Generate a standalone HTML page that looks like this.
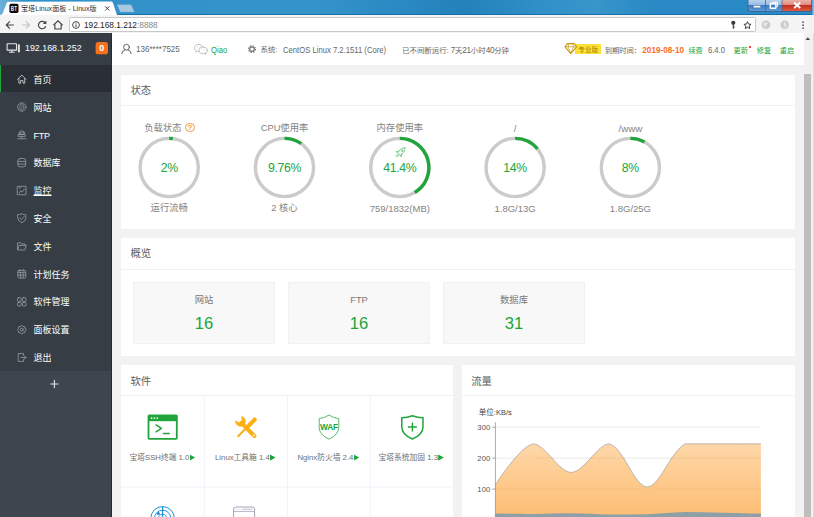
<!DOCTYPE html>
<html lang="zh-CN">
<head>
<meta charset="utf-8">
<title>宝塔Linux面板 - Linux版</title>
<style>
*{box-sizing:border-box;margin:0;padding:0}
html,body{width:814px;height:517px;overflow:hidden;background:#f2f2f2}
body{position:relative;font-family:"Liberation Sans","Noto Sans CJK SC",sans-serif;font-size:8.4px;color:#666;-webkit-font-smoothing:antialiased}
.abs{position:absolute}
.t{position:absolute;white-space:nowrap;line-height:1}
svg{position:absolute;overflow:visible}
/* browser chrome */
#tabbar{left:0;top:0;width:814px;height:15px;background:linear-gradient(90deg,#6cb0da 0%,#62a9d6 0.8%,#3190c9 3%,#3594c9 38%,#2a88c2 50%,#2481b9 57%,#2f8fc7 66%,#3996cb 73%,#2989c4 80%,#2a8ac6 100%)}
#toolbar{left:0;top:14.5px;width:814px;height:18.5px;background:#f4f4f4}
#omni{left:68.6px;top:17px;width:687.3px;height:15.2px;background:#fff;border:0.8px solid #c8c8c8;border-radius:1.6px}
/* sidebar */
#side{left:0;top:33px;width:111.5px;height:484px;background:#363d45}
#sidebot{left:0;top:370.8px;width:111.5px;height:147px;background:#3d454e}
#active{left:0;top:65px;width:111.5px;height:27.4px;background:#2a2f36;border-left:1.8px solid #20a53a}
.mi{left:33.5px;color:#fff;font-size:9px}
/* header */
#hdr{left:112px;top:33px;width:692px;height:32px;background:#fff}
.card{background:#fff}
.ct{font-size:10.4px;color:#606060}
.hr{height:1px;background:#f1f1f1}
.lbl{font-size:9.3px;color:#838383;text-align:center;width:116px}
.val{font-size:12.3px;letter-spacing:-0.35px;color:#20a53a;text-align:center;width:116px}
.ovb{background:#f8f8f8;border:1px solid #f1f1f1;width:141.6px;height:61.5px;top:282px}
.g{color:#20a53a}
.n{font-size:8.3px;letter-spacing:-0.35px}
.sw{font-size:7.75px;color:#707070;text-align:center;width:83px}
.tri{display:inline-block;width:5.6px;height:6.4px;background:#20a53a;clip-path:polygon(0 0,100% 50%,0 100%);margin-left:0.2px;vertical-align:-0.9px}
</style>
</head>
<body>
<!-- ===== browser chrome ===== -->
<div class="abs" id="tabbar"></div>
<svg style="left:0;top:0" width="814" height="16" viewBox="0 0 814 16">
  <defs><linearGradient id="cl" x1="0" y1="0" x2="0" y2="1"><stop offset="0" stop-color="#eab0a8"/><stop offset="0.45" stop-color="#e08a80"/><stop offset="0.5" stop-color="#c4301f"/><stop offset="1" stop-color="#dc5a40"/></linearGradient>
  <linearGradient id="wb" x1="0" y1="0" x2="0" y2="1"><stop offset="0" stop-color="#b9d2ec"/><stop offset="0.45" stop-color="#96bbe3"/><stop offset="0.5" stop-color="#3f7cc2"/><stop offset="1" stop-color="#5d9ad6"/></linearGradient></defs>
  <path d="M0 15 Q2 14.6 2.6 13.4 L6.6 3 Q7.2 1.7 8.6 1.7 L111 1.6 Q112.5 1.6 113 3 L116.8 14.5 L120 15 L814 15 L814 16 L0 16 Z" fill="#fff"/>
  <rect x="117" y="14.1" width="697" height="0.8" fill="#1568a2"/>
  <path d="M117.2 4.8 L131 4.8 L134.4 11.9 L120.4 11.9 Z" fill="#a9c9e3" stroke="#86b3d8" stroke-width="0.5"/>
  <!-- window controls -->
  <path d="M747.6 0 H812 V9.2 Q812 11.8 809.4 11.8 H750.2 Q747.6 11.8 747.6 9.2 Z" fill="#3b5f8a"/>
  <path d="M748.4 0 H765 V11 H750.6 Q748.4 11 748.4 8.8 Z" fill="url(#wb)"/>
  <rect x="765.7" y="0" width="16" height="11" fill="url(#wb)"/>
  <path d="M782.4 0 H811.2 V8.8 Q811.2 11 809 11 H782.4 Z" fill="url(#cl)"/>
  <rect x="753.4" y="5.6" width="7.2" height="2.2" rx="0.5" fill="#fff" stroke="#3d5a80" stroke-width="0.4"/>
  <rect x="770.3" y="3.6" width="5.6" height="4.6" rx="0.5" fill="none" stroke="#fff" stroke-width="1.5"/>
  <path d="M772.4 3.2 V2.2 H777.6 V6.6 H776.6" fill="none" stroke="#fff" stroke-width="1"/>
  <path d="M794.2 2.4 L800.2 8 M800.2 2.4 L794.2 8" stroke="#fff" stroke-width="2"/>
  <rect x="812.4" y="0" width="1.6" height="33" fill="#7fbde8"/>
  <!-- favicon -->
  <rect x="9.4" y="3.8" width="9.1" height="9.1" rx="1.7" fill="#080808"/>
  <text x="13.95" y="10.9" font-size="7.2" font-weight="700" fill="#eee" text-anchor="middle" font-family="Liberation Sans, sans-serif" textLength="6.2" lengthAdjust="spacingAndGlyphs">BT</text>
  <path d="M105.2 6.3 L109.4 10.5 M109.4 6.3 L105.2 10.5" stroke="#333" stroke-width="0.9"/>
</svg>
<div class="t" style="left:21px;top:6.1px;font-size:7.1px;color:#333">宝塔Linux面板 - Linux版</div>
<div class="abs" id="toolbar"></div>
<div class="abs" id="omni"></div>
<svg style="left:0;top:15px" width="814" height="18" viewBox="0 15 814 18" fill="none">
  <!-- back -->
  <path d="M13.8 25 H6.4 M9.9 21.4 L6.3 25 L9.9 28.6" stroke="#444" stroke-width="1.15"/>
  <!-- forward -->
  <path d="M22 25 H29.4 M25.9 21.4 L29.5 25 L25.9 28.6" stroke="#c4c4c4" stroke-width="1.15"/>
  <!-- reload -->
  <path d="M45.3 23 A3.7 3.7 0 1 0 45.7 26.2" stroke="#444" stroke-width="1.15"/>
  <path d="M46.3 20.6 V24 H42.9 Z" fill="#444"/>
  <!-- home -->
  <path d="M53.4 25.2 L58 20.9 L62.6 25.2 M54.9 24.4 V29 H61.1 V24.4" stroke="#444" stroke-width="1.15"/>
  <!-- info -->
  <circle cx="76" cy="25" r="3.4" stroke="#3c3c3c" stroke-width="0.95"/>
  <path d="M76 24.4 V27 M76 22.8 V23.6" stroke="#3c3c3c" stroke-width="1"/>
  <!-- key -->
  <circle cx="733.3" cy="22.8" r="2.1" fill="#3a3a3a"/><path d="M733.3 24 V28.7 M733.3 27 H734.7" stroke="#3a3a3a" stroke-width="1.1"/>
  <!-- star -->
  <path d="M747.5 21.7 L748.55 24.1 L751.1 24.3 L749.15 26 L749.75 28.6 L747.5 27.2 L745.25 28.6 L745.85 26 L743.9 24.3 L746.45 24.1 Z" stroke="#3a3a3a" stroke-width="0.95"/>
  <!-- ext icons -->
  <circle cx="766" cy="24.7" r="4.3" fill="#c9c9c9"/><path d="M763.5 23 Q766 21 768 23.5 Q766 25 765.5 27.5 Q763 26 763.5 23Z" fill="#e6e6e6"/>
  <circle cx="784.7" cy="24.7" r="4.3" fill="#cdcdcd"/><path d="M784 22 Q787 23 786 28 Q783.5 26 784 22Z" fill="#e9e9e9"/>
  <!-- menu -->
  <circle cx="803.1" cy="22.2" r="0.85" fill="#555"/><circle cx="803.1" cy="25.2" r="0.85" fill="#555"/><circle cx="803.1" cy="28.2" r="0.85" fill="#555"/>
</svg>
<div class="t" style="left:84px;top:20.9px;font-size:9.1px;color:#222;transform:scaleX(0.911);transform-origin:0 0">192.168.1.212<span style="color:#888">:8888</span></div>

<!-- ===== sidebar ===== -->
<div class="abs" id="side"></div>
<div class="abs" id="sidebot"></div>
<div class="abs" id="active"></div>

<div class="abs" style="left:110.5px;top:33px;width:1px;height:484px;background:#252a30"></div>
<svg style="left:0;top:33px" width="112" height="484" viewBox="0 33 112 484" fill="none" stroke-linecap="round" stroke-linejoin="round">
  <!-- monitor icon -->
  <rect x="7.1" y="43.7" width="9.4" height="6.4" rx="0.4" stroke="#e8e8e8" stroke-width="1.1"/>
  <path d="M9.4 52.2 H14.2 M11.8 50.3 V52" stroke="#e8e8e8" stroke-width="1"/>
  <rect x="17.9" y="44.4" width="1.9" height="7.9" fill="#e8e8e8"/>
  <!-- badge -->
  <rect x="95.6" y="42" width="12.4" height="12.3" rx="2.6" fill="#f7711c"/>

  <path d="M17.6 79.4 L21.8 75.0 L26 79.4 M18.9 78.60000000000001 V83.2 H20.6 V80.60000000000001 H23 V83.2 H24.7 V78.60000000000001" stroke="#d8dadc" stroke-width="0.8" stroke-width="0.95"/>
  <circle cx="21.8" cy="107.03" r="4.2" stroke="#8d9399" stroke-width="0.75"/><ellipse cx="21.8" cy="107.03" rx="2" ry="4.2" stroke="#8d9399" stroke-width="0.45"/><path d="M17.6 107.03 H26 M18.4 104.83 H25.2 M18.4 109.23 H25.2 M21.8 102.83 V111.23" stroke="#8d9399" stroke-width="0.4"/>
  <path d="M19 134.26000000000002 Q19 130.66000000000003 21.8 130.66000000000003 Q24.6 130.66000000000003 24.6 134.26000000000002 Z M18.5 134.46 H25.1 V136.46 H18.5 Z M21.8 136.66000000000003 V138.46 M17.6 138.76000000000002 H26" stroke="#9a9fa5" stroke-width="0.8"/><path d="M19.2 132.86 H24.4" stroke="#9a9fa5" stroke-width="0.8" stroke-width="0.5"/>
  <rect x="17.9" y="158.49" width="7.8" height="8.4" rx="2.2" stroke="#9a9fa5" stroke-width="0.8"/><path d="M18 161.39 H25.6 M18 164.09 H25.6" stroke="#9a9fa5" stroke-width="0.8" stroke-width="0.6"/>
  <rect x="17.6" y="186.32000000000002" width="8.4" height="8.4" stroke="#9a9fa5" stroke-width="0.8"/><path d="M19.2 192.92000000000002 L20.8 190.72 L22.2 192.12 L24.4 189.12" stroke="#9a9fa5" stroke-width="0.8" stroke-width="0.55"/><path d="M19.2 187.92000000000002 H20.4" stroke="#9a9fa5" stroke-width="0.8" stroke-width="0.55"/>
  <path d="M17.8 214.75 Q20 214.75 21.8 213.75 Q23.6 214.75 25.8 214.75 V218.35 Q25.8 220.95 21.8 222.75 Q17.8 220.95 17.8 218.35 Z" stroke="#9a9fa5" stroke-width="0.8"/><path d="M19.8 217.95 L21.3 219.54999999999998 L24 216.54999999999998" stroke="#9a9fa5" stroke-width="0.8"/>
  <path d="M17.6 249.58 V242.78 H20.6 L21.6 243.98000000000002 H25 V245.38 M17.6 249.58 L19.2 245.38 H26.4 L24.8 249.58 Z" stroke="#9a9fa5" stroke-width="0.8"/>
  <rect x="17.8" y="270.40999999999997" width="8" height="7.6" rx="1.2" stroke="#9a9fa5" stroke-width="0.8"/><path d="M17.9 272.31 H25.7 M20.4 272.40999999999997 V277.90999999999997 M23.1 272.40999999999997 V277.90999999999997 M17.9 275.11 H25.7" stroke="#9a9fa5" stroke-width="0.8" stroke-width="0.45"/><path d="M19.8 269.61 V270.81 M23.7 269.61 V270.81" stroke="#9a9fa5" stroke-width="0.8" stroke-width="0.6"/>
  <rect x="17.6" y="297.64" width="3.6" height="3.7" rx="0.9" stroke="#9a9fa5" stroke-width="0.8"/><rect x="17.6" y="302.34" width="3.6" height="3.7" rx="0.9" stroke="#9a9fa5" stroke-width="0.8"/><rect x="22.4" y="297.64" width="3.6" height="3.7" rx="0.9" stroke="#9a9fa5" stroke-width="0.8"/><rect x="22.4" y="302.34" width="3.6" height="3.7" rx="0.9" stroke="#9a9fa5" stroke-width="0.8"/>
  <polygon points="26.10,329.67 25.03,331.01 24.84,332.71 23.14,332.90 21.80,333.97 20.46,332.90 18.76,332.71 18.57,331.01 17.50,329.67 18.57,328.33 18.76,326.63 20.46,326.44 21.80,325.37 23.14,326.44 24.84,326.63 25.03,328.33" stroke="#9a9fa5" stroke-width="0.8" stroke-width="0.7"/><circle cx="21.8" cy="329.67" r="1.5" stroke="#9a9fa5" stroke-width="0.8" stroke-width="0.7"/>
  <path d="M23.6 355.5 V353.6 H18.2 V361.4 H23.6 V359.5" stroke="#9a9fa5" stroke-width="0.8"/><path d="M21 357.5 H26 M24.4 355.9 L26 357.5 L24.4 359.1" stroke="#9a9fa5" stroke-width="0.8"/>
  <path d="M50.8 384 H58 M54.4 380.4 V387.6" stroke="#e6e6e6" stroke-width="1.1"/>
</svg>
<div class="t" style="left:25.4px;top:43px;font-size:9.7px;color:#fff;transform:scaleX(0.914);transform-origin:0 0">192.168.1.252</div>
<div class="t" style="left:95.6px;top:43.7px;width:12.4px;text-align:center;font-size:9px;font-weight:700;color:#fff">0</div>
<div class="t mi" style="top:75.8px">首页</div>
<div class="t mi" style="top:103.6px">网站</div>
<div class="t mi" style="top:131.5px;letter-spacing:-0.3px">FTP</div>
<div class="t mi" style="top:159.3px">数据库</div>
<div class="t mi" style="top:187.1px;text-decoration:underline;text-decoration-thickness:0.6px;text-underline-offset:1px">监控</div>
<div class="t mi" style="top:214.9px">安全</div>
<div class="t mi" style="top:242.8px">文件</div>
<div class="t mi" style="top:270.6px">计划任务</div>
<div class="t mi" style="top:298.4px">软件管理</div>
<div class="t mi" style="top:326.3px">面板设置</div>
<div class="t mi" style="top:354.1px">退出</div>

<!-- ===== header ===== -->
<div class="abs" id="hdr"></div>
<svg style="left:112px;top:33px" width="692" height="32" viewBox="112 33 692 32" fill="none" stroke-linecap="round" stroke-linejoin="round">
  <!-- user -->
  <circle cx="126.5" cy="47.2" r="2.9" stroke="#555" stroke-width="0.9"/>
  <path d="M121.8 53.6 Q122.4 50.4 125 49.8 M131.2 53.6 Q130.6 50.4 128 49.8" stroke="#555" stroke-width="0.9"/>
  <!-- wechat -->
  <path d="M198.6 44.4 C195.8 44.4 194.4 46.2 194.4 47.8 C194.4 49 195 49.9 196 50.6 L195.6 52 L197.2 51.2 C197.8 51.3 198.2 51.4 198.8 51.4" stroke="#aaa" stroke-width="0.7"/>
  <path d="M198.6 44.4 C201 44.4 202.6 45.8 202.9 47.3" stroke="#aaa" stroke-width="0.7"/>
  <ellipse cx="203.2" cy="50.4" rx="4.1" ry="3.3" stroke="#aaa" stroke-width="0.7"/>
  <path d="M204.6 53.4 L206 54.4 L205.7 53" stroke="#aaa" stroke-width="0.6"/>
  <circle cx="197.2" cy="47" r="0.45" fill="#aaa"/><circle cx="200" cy="47" r="0.45" fill="#aaa"/>
  <circle cx="201.9" cy="49.8" r="0.4" fill="#aaa"/><circle cx="204.5" cy="49.8" r="0.4" fill="#aaa"/>
  <!-- gear -->
  <g transform="translate(252 49.1)"><circle r="2.3" stroke="#6e6e6e" stroke-width="1.2"/><circle r="3.4" stroke="#6e6e6e" stroke-width="1.2" stroke-dasharray="1.3 1.37" stroke-linecap="butt"/></g>
</svg>
<div class="abs" style="left:575px;top:44px;width:26.3px;height:10px;background:#fbe238;z-index:0"></div>
<svg style="left:560px;top:40px" width="20" height="18" viewBox="560 40 20 18" fill="none" stroke-linejoin="round">
  <path d="M567.4 43.6 H574.2 L576.6 46.8 L570.8 53.6 L565 46.8 Z" fill="#fff" stroke="#c9980f" stroke-width="1.1"/>
  <path d="M565.2 46.8 H576.4 M568.8 43.8 L568 46.8 L570.8 53.2 L573.6 46.8 L572.8 43.8" stroke="#c9980f" stroke-width="0.7"/>
</svg>
<div class="t" style="left:135.8px;top:45.3px;font-size:8.6px;color:#666;transform:scaleX(0.935);transform-origin:0 0">136****7525</div>
<div class="t" style="left:210.8px;top:45.5px;font-size:8.3px;color:#20a53a;transform:scaleX(0.924);transform-origin:0 0">Qiao</div>
<div class="t" style="left:260.6px;top:45.9px;font-size:7.4px;color:#666">系统:</div>
<div class="t" id="osv" style="left:283.3px;top:45.6px;font-size:8.3px;color:#666;transform:scaleX(0.925);transform-origin:0 0">CentOS Linux 7.2.1511 (Core)</div>
<div class="t" id="upt" style="left:402.2px;top:45.9px;font-size:7.4px;color:#666">已不间断运行: <span class="n">7</span>天<span class="n">21</span>小时<span class="n">40</span>分钟</div>
<div class="t" style="left:578.3px;top:46.8px;font-size:6.6px;color:#a67c00">专业版</div>
<div class="t" style="left:604.7px;top:46.7px;font-size:7.3px;color:#666">到期时间：</div>
<div class="t" style="left:642.3px;top:46.7px;font-size:8.2px;color:#fc6d26;font-weight:700">2019-08-10</div>
<div class="t" style="left:688.4px;top:46.7px;font-size:7.2px;color:#20a53a">续费</div>
<div class="t" style="left:708.2px;top:46.2px;font-size:8.3px;color:#666;transform:scaleX(0.920);transform-origin:0 0">6.4.0</div>
<div class="t" style="left:733.5px;top:46.7px;font-size:7.2px;color:#20a53a">更新</div>
<div class="abs" style="left:749.2px;top:45.7px;width:2.2px;height:2.2px;border-radius:50%;background:#f00"></div>
<div class="t" style="left:756.8px;top:46.7px;font-size:7.2px;color:#20a53a">修复</div>
<div class="t" style="left:779.8px;top:46.7px;font-size:7.2px;color:#20a53a">重启</div>

<!-- ===== cards ===== -->
<div class="abs card" id="c1" style="left:121px;top:75px;width:674px;height:154px"></div>
<div class="abs card" id="c2" style="left:121px;top:238px;width:674px;height:118px"></div>
<div class="abs card" id="c3" style="left:121px;top:365.1px;width:332.3px;height:152px"></div>
<div class="abs card" id="c4" style="left:461.7px;top:365.1px;width:333.2px;height:152px"></div>

<div class="t ct" style="left:130.4px;top:85.8px">状态</div>
<div class="abs hr" style="left:121px;top:105px;width:674px"></div>
<div class="t ct" style="left:130.4px;top:249.4px">概览</div>
<div class="abs hr" style="left:121px;top:268.6px;width:674px"></div>
<div class="t ct" style="left:130.4px;top:377px">软件</div>
<div class="abs hr" style="left:121px;top:395.4px;width:332.3px"></div>
<div class="t ct" style="left:471.2px;top:377px">流量</div>
<div class="abs hr" style="left:461.7px;top:395.4px;width:333.2px"></div>
<svg style="left:121px;top:106px" width="674" height="122" viewBox="121 106 674 122" fill="none">
  <circle cx="169.2" cy="167.5" r="29.1" stroke="#cbcbcb" stroke-width="3.4"/>
  <path d="M169.2 138.4 A29.1 29.1 0 0 1 172.85 138.63" stroke="#20a53a" stroke-width="3.4"/>
  <circle cx="284.5" cy="167.5" r="29.1" stroke="#cbcbcb" stroke-width="3.4"/>
  <path d="M284.5 138.4 A29.1 29.1 0 0 1 301.25 143.70" stroke="#20a53a" stroke-width="3.4"/>
  <circle cx="399.8" cy="167.5" r="29.1" stroke="#cbcbcb" stroke-width="3.4"/>
  <path d="M399.8 138.4 A29.1 29.1 0 0 1 414.77 192.45" stroke="#20a53a" stroke-width="3.4"/>
  <circle cx="515.1" cy="167.5" r="29.1" stroke="#cbcbcb" stroke-width="3.4"/>
  <path d="M515.1 138.4 A29.1 29.1 0 0 1 537.52 148.95" stroke="#20a53a" stroke-width="3.4"/>
  <circle cx="630.4" cy="167.5" r="29.1" stroke="#cbcbcb" stroke-width="3.4"/>
  <path d="M630.4 138.4 A29.1 29.1 0 0 1 644.42 142.00" stroke="#20a53a" stroke-width="3.4"/>
  <g transform="translate(400.5 152.4) rotate(45)" stroke="#5cbf70" stroke-width="0.7" fill="none" stroke-linejoin="round" stroke-linecap="round">
    <path d="M0 -6.4 C2.4 -4.2 2.6 -0.6 1.9 2.2 H-1.9 C-2.6 -0.6 -2.4 -4.2 0 -6.4 Z"/>
    <circle cx="0" cy="-2.4" r="0.9"/>
    <path d="M-2 0 L-3.8 2.6 L-1.9 2.2 M2 0 L3.8 2.6 L1.9 2.2"/>
    <path d="M-1 3.4 V5 M0 3.4 V6 M1 3.4 V5"/>
  </g>
</svg>
<div class="t lbl" style="left:104.9px;top:124.1px">负载状态</div>
<div class="abs" style="left:185.3px;top:122.8px;width:9.4px;height:9.4px;border:1px solid #f59a3e;border-radius:50%"></div><div class="t" style="left:185.3px;top:123.9px;width:9.4px;text-align:center;font-size:8px;font-weight:700;color:#f59a3e">?</div>
<div class="t val" style="left:111.2px;top:162px">2%</div>
<div class="t lbl" style="left:111.2px;top:204px">运行流畅</div>
<div class="t lbl" style="left:226.5px;top:124.1px">CPU使用率</div>
<div class="t val" style="left:226.5px;top:162px">9.76%</div>
<div class="t lbl" style="left:226.5px;top:204px">2 核心</div>
<div class="t lbl" style="left:341.8px;top:124.1px">内存使用率</div>
<div class="t val" style="left:341.8px;top:162px">41.4%</div>
<div class="t lbl" style="left:341.8px;top:203.8px;font-size:9.5px">759/1832(MB)</div>
<div class="t lbl" style="left:457.1px;top:123.9px;font-size:9.8px">/</div>
<div class="t val" style="left:457.1px;top:162px">14%</div>
<div class="t lbl" style="left:457.1px;top:203.8px;font-size:9.5px">1.8G/13G</div>
<div class="t lbl" style="left:572.4px;top:123.9px;font-size:9.8px">/www</div>
<div class="t val" style="left:572.4px;top:162px">8%</div>
<div class="t lbl" style="left:572.4px;top:203.8px;font-size:9.5px">1.8G/25G</div>
<div class="abs ovb" style="left:133.2px"></div>
<div class="t" style="left:133.2px;width:141.6px;text-align:center;top:296px;font-size:9.3px;color:#777">网站</div>
<div class="t g" style="left:133.2px;width:141.6px;text-align:center;top:315.8px;font-size:16.6px">16</div>
<div class="abs ovb" style="left:288.2px"></div>
<div class="t" style="left:288.2px;width:141.6px;text-align:center;top:296px;font-size:9.3px;color:#777">FTP</div>
<div class="t g" style="left:288.2px;width:141.6px;text-align:center;top:315.8px;font-size:16.6px">16</div>
<div class="abs ovb" style="left:443.2px"></div>
<div class="t" style="left:443.2px;width:141.6px;text-align:center;top:296px;font-size:9.3px;color:#777">数据库</div>
<div class="t g" style="left:443.2px;width:141.6px;text-align:center;top:315.8px;font-size:16.6px">31</div>

<svg style="left:121px;top:396px" width="333" height="121" viewBox="121 396 333 121" fill="none" stroke-linejoin="round">
  <path d="M204.4 396.5 V517 M287.5 396.5 V517 M370.3 396.5 V517 M121 487 H453.5" stroke="#efeff8" stroke-width="0.9"/>
  <!-- ssh icon -->
  <rect x="148.5" y="415.5" width="28.3" height="23.4" rx="0.8" stroke="#20a53a" stroke-width="1.8"/>
  <rect x="148" y="415" width="29.3" height="6.2" fill="#20a53a"/>
  <circle cx="151.6" cy="418.1" r="0.85" fill="#fff"/><circle cx="154.4" cy="418.1" r="0.85" fill="#fff"/><circle cx="157.2" cy="418.1" r="0.85" fill="#fff"/>
  <path d="M155.6 424.6 L161.4 428.4 L155.6 432.2 M162.8 433.4 H169.8" stroke="#20a53a" stroke-width="1.5"/>
  <!-- tools icon -->
  <g stroke="#fbb116" stroke-linecap="round">
    <path d="M241.4 423 L254.4 436" stroke-width="3.9"/>
    <path d="M254.6 419.6 L248.6 425.8" stroke-width="4.2"/>
    <path d="M246 428.2 L238.2 436.2" stroke-width="2"/>
  </g>
  <path d="M235.6 420.8 A4.9 4.9 0 1 0 241.8 416.6 L242 420.4 L239.4 423 Z" fill="#fbb116" stroke="#fbb116" stroke-width="0.8" stroke-linejoin="round"/>
  <circle cx="253.9" cy="435.5" r="0.9" fill="#fff"/>
  <!-- waf shield -->
  <path d="M329 415 Q333.4 418 338.8 418.6 V427.6 Q338.8 434.4 329 439.2 Q319.2 434.4 319.2 427.6 V418.6 Q324.6 418 329 415 Z" stroke="#20a53a" stroke-width="0.75"/>
  <!-- shield plus -->
  <path d="M412.4 415.8 Q417.6 417.8 423 417.8 V427 Q423 434.6 412.4 439 Q401.8 434.6 401.8 427 V417.8 Q407.2 417.8 412.4 415.8 Z" stroke="#20a53a" stroke-width="1.5"/>
  <path d="M412.4 422.6 V431.4 M408 427 H416.8" stroke="#20a53a" stroke-width="1.4"/>
  <!-- radar -->
  <g stroke="#1c8fd6">
    <circle cx="162.6" cy="518.4" r="11.8" stroke-width="1"/>
    <circle cx="162.6" cy="518.4" r="8.2" stroke-width="1"/>
    <circle cx="162.6" cy="518.4" r="4.2" stroke-width="0.9"/>
    <path d="M162.6 506.6 V517" stroke-width="1.2"/>
  </g>
  <circle cx="158.4" cy="513.6" r="1.5" fill="#1c8fd6"/>
  <!-- window -->
  <path d="M233.6 517 V509 Q233.6 507 235.6 507 H252.6 Q254.6 507 254.6 509 V517" stroke="#a3a3b5" stroke-width="1"/>
  <path d="M233.6 511.4 H254.6" stroke="#a3a3b5" stroke-width="0.8"/>
  <path d="M235.6 509.2 H236.4 M237.6 509.2 H238.4 M239.6 509.2 H240.4 M242.4 509.2 H252.4" stroke="#a3a3b5" stroke-width="0.7"/>
</svg>
<div class="t" style="left:319.2px;top:423px;width:19.6px;text-align:center;font-size:8.4px;font-weight:700;color:#20a53a;letter-spacing:-0.25px">WAF</div>
<div class="t sw" style="left:120.8px;top:453.9px">宝塔SSH终端 1.0<span class="tri"></span></div>
<div class="t sw" style="left:203.8px;top:453.9px">Linux工具箱 1.4<span class="tri"></span></div>
<div class="t sw" style="left:286.8px;top:453.9px">Nginx防火墙 2.4<span class="tri"></span></div>
<div class="t sw" style="left:369.7px;top:453.9px">宝塔系统加固 1.3<span class="tri"></span></div>

<svg id="chart" style="left:462px;top:397px" width="333" height="120" viewBox="462 397 333 120" fill="none">
  <defs><linearGradient id="og" x1="0" y1="443" x2="0" y2="517" gradientUnits="userSpaceOnUse"><stop offset="0" stop-color="#fed3a0"/><stop offset="1" stop-color="#fdb663"/></linearGradient></defs>
  <path d="M495.4 427.1 H760.9 M495.4 458.1 H760.9 M495.4 489.1 H760.9" stroke="#e2e2e2" stroke-width="0.7"/>
  <path d="M495.40 484.76 C495.40 484.76 519.80 446.05 533.33 443.84 C544.83 443.84 558.74 472.36 571.26 472.36 C583.77 472.36 597.86 443.84 609.19 443.84 C622.89 446.47 634.60 486.93 647.11 486.93 C659.63 486.93 669.97 452.40 685.04 443.84 C695.00 443.84 710.46 443.84 722.97 443.84 C735.49 443.84 760.90 443.84 760.90 443.84 L760.9 520 L495.4 520 Z" fill="url(#og)" fill-opacity="0.9"/>
  <path d="M533.5 458.1 H555 M590 458.1 H626 M670 458.1 H760.9 M495.4 489.1 H642 M653 489.1 H760.9" stroke="#d89a58" stroke-width="0.6" opacity="0.3"/>
  <path d="M495.40 484.76 C495.40 484.76 519.80 446.05 533.33 443.84 C544.83 443.84 558.74 472.36 571.26 472.36 C583.77 472.36 597.86 443.84 609.19 443.84 C622.89 446.47 634.60 486.93 647.11 486.93 C659.63 486.93 669.97 452.40 685.04 443.84 C695.00 443.84 710.46 443.84 722.97 443.84 C735.49 443.84 760.90 443.84 760.90 443.84" stroke="#a4a4a4" stroke-width="0.7"/>
  <path d="M495.40 513.59 C495.40 513.59 520.81 513.90 533.33 513.90 C545.85 513.85 558.74 513.28 571.26 513.28 C583.78 513.38 596.67 514.37 609.19 514.52 C621.70 514.52 634.61 514.52 647.11 514.21 C659.64 513.80 672.52 512.30 685.04 512.04 C697.55 512.04 710.46 512.40 722.97 512.66 C735.49 512.92 760.90 513.59 760.90 513.59 L760.9 520 L495.4 520 Z" fill="#8da0a8"/>
  <path d="M495.4 422.4 V517" stroke="#888" stroke-width="0.7"/>
  <path d="M492.2 427.1 H495.4 M492.2 458.1 H495.4 M492.2 489.1 H495.4" stroke="#888" stroke-width="0.7"/>
  <g font-size="7.7" fill="#555" text-anchor="end" font-family="Liberation Sans, sans-serif">
    <text x="490.2" y="430">300</text><text x="490.2" y="461">200</text><text x="490.2" y="492">100</text>
  </g>
</svg>
<div class="t" style="left:478.8px;top:408.9px;font-size:7.5px;color:#444">单位:KB/s</div>

<!-- ===== scrollbar ===== -->
<div class="abs" id="sbar" style="left:804px;top:33px;width:10px;height:484px;background:linear-gradient(90deg,#f1f1f1 0,#f1f1f1 8.6px,#d9dee4 8.6px)"></div>
<div class="abs" id="sthumb" style="left:804.3px;top:74px;width:6.9px;height:443px;background:#bebebe"></div>
<svg style="left:804px;top:33px" width="10" height="12" viewBox="804 33 10 12"><path d="M805.5 40 L807.8 37.3 L810.1 40 Z" fill="#4a4a4a"/></svg>
</body>
</html>
